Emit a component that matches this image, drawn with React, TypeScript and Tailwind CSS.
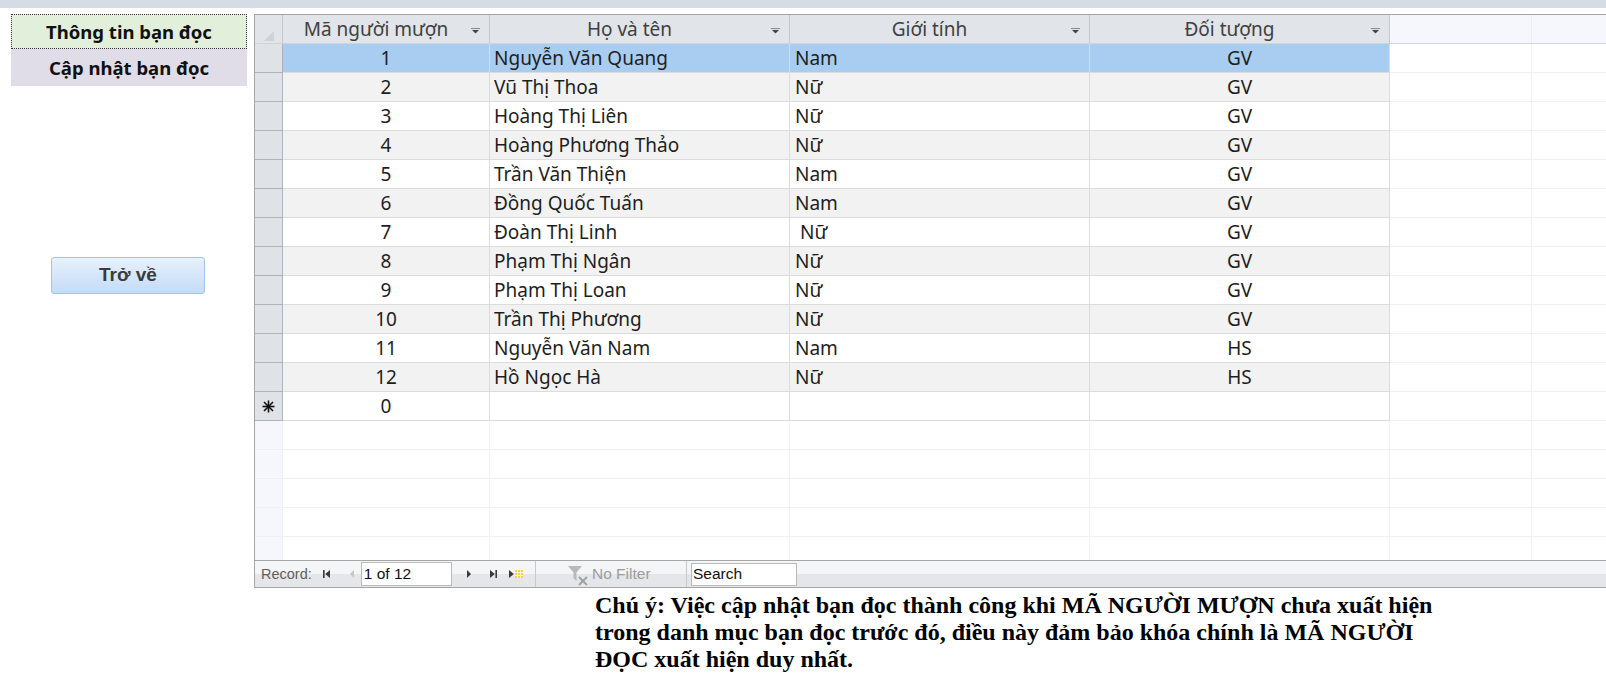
import React from "react";

type Reader = { id: number; name: string; sex: string; group: string };

const readers: Reader[] = [
  { id: 1, name: "Nguyễn Văn Quang", sex: "Nam", group: "GV" },
  { id: 2, name: "Vũ Thị Thoa", sex: "Nữ", group: "GV" },
  { id: 3, name: "Hoàng Thị Liên", sex: "Nữ", group: "GV" },
  { id: 4, name: "Hoàng Phương Thảo", sex: "Nữ", group: "GV" },
  { id: 5, name: "Trần Văn Thiện", sex: "Nam", group: "GV" },
  { id: 6, name: "Đồng Quốc Tuấn", sex: "Nam", group: "GV" },
  { id: 7, name: "Đoàn Thị Linh", sex: "\u00a0Nữ", group: "GV" },
  { id: 8, name: "Phạm Thị Ngân", sex: "Nữ", group: "GV" },
  { id: 9, name: "Phạm Thị Loan", sex: "Nữ", group: "GV" },
  { id: 10, name: "Trần Thị Phương", sex: "Nữ", group: "GV" },
  { id: 11, name: "Nguyễn Văn Nam", sex: "Nam", group: "HS" },
  { id: 12, name: "Hồ Ngọc Hà", sex: "Nữ", group: "HS" },
];

const cellFont = "font-['Noto_Sans',sans-serif] text-[19px] text-[#1e1e1e]";

function DropArrow() {
  return (
    <svg width="9" height="6" viewBox="0 0 9 6" className="shrink-0">
      <rect x="0" y="0" width="9" height="1" fill="#8a8a8a" />
      <path d="M1 2 H8 L4.5 5.5 Z" fill="#444" />
    </svg>
  );
}

function HeaderCell({ label, w }: { label: string; w: string }) {
  return (
    <div className={`${w} h-full flex items-center border-r border-[#c4c7cc] relative`}>
      <span className="flex-1 text-center pr-[20px] text-[#404040]">{label}</span>
      <span className="absolute right-[9px] top-[13px]">
        <DropArrow />
      </span>
    </div>
  );
}

function DataRow({ r, idx }: { r: Reader; idx: number }) {
  const selected = idx === 0;
  const bg = selected ? "bg-[#a8cdf0]" : idx % 2 === 1 ? "bg-[#f2f2f2]" : "bg-white";
  const line = "border-r border-b border-[#dcdcdc]";
  return (
    <div className={`flex h-[29px] shrink-0 ${cellFont}`}>
      <div className="w-[28px] shrink-0 bg-[#dfe3e8] border-r border-b border-[#aeb3b9]" />
      <div className={`w-[207px] shrink-0 ${bg} ${line} flex items-center justify-center`}>{r.id}</div>
      <div className={`w-[300px] shrink-0 ${bg} ${line} flex items-center pl-[4px] whitespace-pre`}>{r.name}</div>
      <div className={`w-[300px] shrink-0 ${bg} ${line} flex items-center pl-[5px] whitespace-pre`}>{r.sex}</div>
      <div className={`w-[300px] shrink-0 ${bg} ${line} flex items-center justify-center`}>{r.group}</div>
      <div className="w-[142px] shrink-0 bg-white border-r border-b border-[#f0f0f0]" />
      <div className="flex-1 bg-white border-b border-[#f0f0f0]" />
    </div>
  );
}

function NewRow() {
  const line = "border-r border-b border-[#dcdcdc]";
  return (
    <div className={`flex h-[29px] shrink-0 ${cellFont}`}>
      <div className="w-[28px] shrink-0 bg-[#dfe3e8] border-r border-b border-[#aeb3b9] flex items-center justify-center">
        <svg width="13" height="13" viewBox="0 0 13 13">
          <g stroke="#111" strokeWidth="1.6">
            <line x1="6.5" y1="0.5" x2="6.5" y2="12.5" />
            <line x1="0.5" y1="6.5" x2="12.5" y2="6.5" />
            <line x1="2" y1="2" x2="11" y2="11" />
            <line x1="11" y1="2" x2="2" y2="11" />
          </g>
        </svg>
      </div>
      <div className={`w-[207px] shrink-0 bg-white ${line} flex items-center justify-center`}>0</div>
      <div className={`w-[300px] shrink-0 bg-white ${line}`} />
      <div className={`w-[300px] shrink-0 bg-white ${line}`} />
      <div className={`w-[300px] shrink-0 bg-white ${line}`} />
      <div className="w-[142px] shrink-0 bg-white border-r border-b border-[#f0f0f0]" />
      <div className="flex-1 bg-white border-b border-[#f0f0f0]" />
    </div>
  );
}

function EmptyRow() {
  const line = "border-r border-b border-[#f0f0f0]";
  return (
    <div className="flex h-[29px] shrink-0">
      <div className="w-[28px] shrink-0 bg-[#f5f7fc] border-r border-b border-[#eef0f4]" />
      <div className={`w-[207px] shrink-0 bg-white ${line}`} />
      <div className={`w-[300px] shrink-0 bg-white ${line}`} />
      <div className={`w-[300px] shrink-0 bg-white ${line}`} />
      <div className={`w-[300px] shrink-0 bg-white ${line}`} />
      <div className={`w-[142px] shrink-0 bg-white ${line}`} />
      <div className="flex-1 bg-white border-b border-[#f0f0f0]" />
    </div>
  );
}

function NavBar() {
  return (
    <div className="h-[28px] border-t border-b border-[#a6a6a6] bg-gradient-to-b from-[#f4f5f7] from-50% to-[#e4e6ea] to-50% flex items-center font-['Liberation_Sans',sans-serif] text-[14.5px]">
      <div className="w-[281px] h-full flex items-center border-r border-[#c8c8c8]">
        <span className="ml-[6px] mt-[1px] text-[#5f5f5f]">Record:</span>
        {/* first */}
        <svg width="10" height="10" viewBox="0 0 10 10" className="ml-[10px]">
          <rect x="1" y="1" width="1.6" height="8" fill="#3a3a3a" />
          <path d="M8 1 L3.2 5 L8 9 Z" fill="#3a3a3a" />
        </svg>
        {/* prev */}
        <svg width="8" height="10" viewBox="0 0 8 10" className="ml-[16px]">
          <path d="M6 1 L2 5 L6 9 Z" fill="#c6c6c6" />
        </svg>
        <div className="ml-[5px] w-[91px] h-[24px] bg-white border border-[#b9b9b9] flex items-center pl-[2px] text-[15.5px] text-[#111]">
          1 of 12
        </div>
        {/* next */}
        <svg width="8" height="10" viewBox="0 0 8 10" className="ml-[13px]">
          <path d="M2 1 L6 5 L2 9 Z" fill="#3a3a3a" />
        </svg>
        {/* last */}
        <svg width="10" height="10" viewBox="0 0 10 10" className="ml-[15px]">
          <path d="M2 1 L6.8 5 L2 9 Z" fill="#3a3a3a" />
          <rect x="7.4" y="1" width="1.6" height="8" fill="#3a3a3a" />
        </svg>
        {/* new */}
        <svg width="16" height="10" viewBox="0 0 16 10" className="ml-[10px]">
          <path d="M1 1 L5.8 5 L1 9 Z" fill="#3a3a3a" />
          <rect x="7" y="1" width="8" height="8" fill="#f3d34a" />
          <g stroke="#fff7c8" strokeWidth="1">
            <line x1="9.5" y1="1" x2="9.5" y2="9" />
            <line x1="12.5" y1="1" x2="12.5" y2="9" />
            <line x1="7" y1="3.5" x2="15" y2="3.5" />
            <line x1="7" y1="6.5" x2="15" y2="6.5" />
          </g>
        </svg>
      </div>
      <div className="w-[151px] h-full flex items-center border-r border-[#c8c8c8]">
        {/* filter */}
        <svg width="24" height="22" viewBox="0 0 24 22" className="ml-[31px] mt-[3px]">
          <path d="M1 1 H15 L9.5 7.5 V16 L6.5 13.5 V7.5 Z" fill="#b9b9b9" />
          <g stroke="#a0a0a0" strokeWidth="1.8">
            <line x1="12" y1="12" x2="20" y2="20" />
            <line x1="20" y1="12" x2="12" y2="20" />
          </g>
        </svg>
        <span className="ml-[1px] text-[15.5px] text-[#9c9c9c]">No Filter</span>
      </div>
      <div className="ml-[4px] w-[106px] h-[23px] bg-white border border-[#b9b9b9] flex items-center pl-[1px] text-[15.5px] text-[#111]">
        Search
      </div>
    </div>
  );
}

export default function App() {
  return (
    <div className="w-[1606px] h-[697px] bg-white overflow-hidden">
      <div className="h-[8px] bg-[#d5dce6]" />
      <div className="flex pt-[6px]">
        <div className="w-[254px] shrink-0 pl-[11px]">
          <div className="w-[236px] font-['Noto_Sans',sans-serif] font-bold text-[18.5px] text-[#111]">
            <div className="h-[35px] bg-[#e2efda] border border-dotted border-[#333] flex items-center justify-center">
              Thông tin bạn đọc
            </div>
            <div className="h-[37px] bg-[#e0dde8] flex items-center justify-center">Cập nhật bạn đọc</div>
          </div>
          <button className="mt-[171px] ml-[40px] w-[154px] h-[37px] rounded-[3px] border border-[#a4c3e8] bg-gradient-to-b from-[#e8f1fc] to-[#c3dbf7] font-['Liberation_Sans',sans-serif] font-bold text-[19px] text-[#3b3b3b] flex items-center justify-center">
            Trở về
          </button>
        </div>
        <div className="flex-1 flex flex-col">
          <div className="border-l border-t border-[#a6a6a6] flex flex-col">
            <div className={`flex h-[29px] ${cellFont} bg-[#e1e4e9] border-b border-[#d0d3d8]`}>
              <div className="w-[28px] shrink-0 border-r border-[#c4c7cc] relative">
                <svg width="10" height="10" viewBox="0 0 10 10" className="absolute left-[9px] bottom-[2px]">
                  <path d="M10 0 V10 H0 Z" fill="#cfd3d9" />
                </svg>
              </div>
              <HeaderCell label="Mã người mượn" w="w-[207px] shrink-0" />
              <HeaderCell label="Họ và tên" w="w-[300px] shrink-0" />
              <HeaderCell label="Giới tính" w="w-[300px] shrink-0" />
              <HeaderCell label="Đối tượng" w="w-[300px] shrink-0" />
              <div className="w-[142px] shrink-0 bg-[#f5f7fd] border-r border-[#eceef3]" />
              <div className="flex-1 bg-[#f5f7fd]" />
            </div>
            <div className="h-[516px] overflow-hidden flex flex-col">
              {readers.map((r, i) => (
                <DataRow key={r.id} r={r} idx={i} />
              ))}
              <NewRow />
              {[0, 1, 2, 3, 4].map((k) => (
                <EmptyRow key={k} />
              ))}
            </div>
            <NavBar />
          </div>
          <div className="ml-[341px] mt-[4px] font-['Liberation_Serif',serif] font-bold text-[24px] leading-[27px] text-black">
            <div>Chú ý: Việc cập nhật bạn đọc thành công khi MÃ NGƯỜI MƯỢN chưa xuất hiện</div>
            <div>trong danh mục bạn đọc trước đó, điều này đảm bảo khóa chính là MÃ NGƯỜI</div>
            <div>ĐỌC xuất hiện duy nhất.</div>
          </div>
        </div>
      </div>
    </div>
  );
}
